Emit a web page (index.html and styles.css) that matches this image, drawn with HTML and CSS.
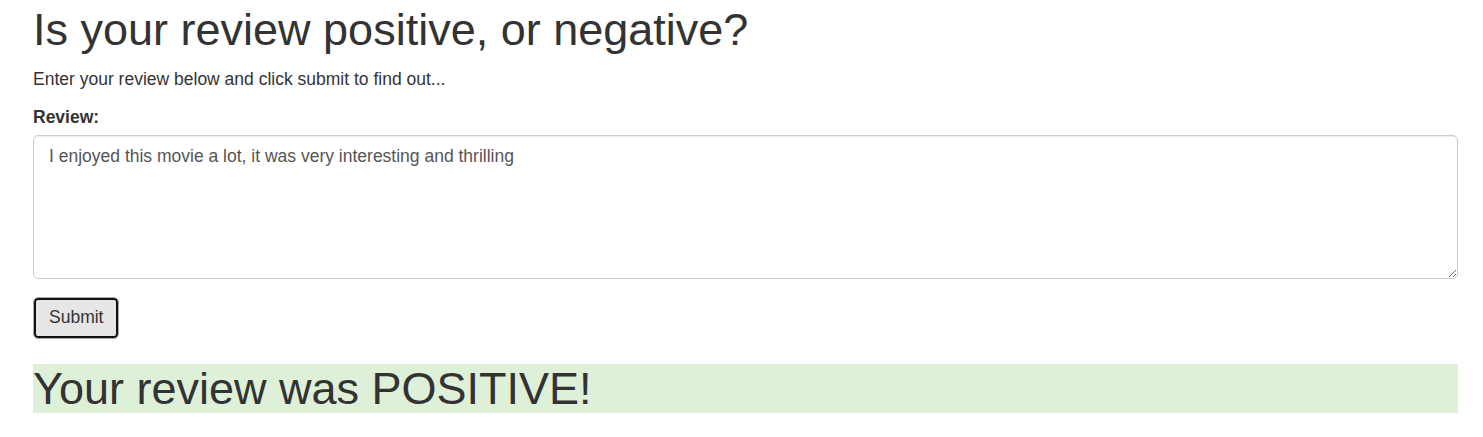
FILE: index.html
```html
<!DOCTYPE html>
<html lang="en">
<head>
<meta charset="utf-8">
<title>Review sentiment</title>
<link rel="stylesheet" href="styles.css">
</head>
<body>
<div class="container">
  <h1 class="title">Is your review positive, or negative?</h1>
  <p class="lead-text">Enter your review below and click submit to find out...</p>
  <form class="review-form">
    <div class="form-group">
      <label class="field-label" for="review">Review:</label>
      <textarea class="form-control" id="review" rows="5">I enjoyed this movie a lot, it was very interesting and thrilling</textarea>
    </div>
    <button type="button" class="btn btn-focus">Submit</button>
  </form>
  <h1 class="result">Your review was POSITIVE!</h1>
</div>
</body>
</html>
```
FILE: styles.css
```css
html, body {
  margin: 0;
  padding: 0;
  background: #fff;
}
body {
  font-family: "Liberation Sans", Arial, Helvetica, sans-serif;
  font-size: 17.5px;
  line-height: 25px;
  color: #333;
}
.container {
  padding: 0 25px 0 33px;
}
.title {
  font-size: 45px;
  font-weight: 400;
  line-height: 49.5px;
  margin: 5.4px 0 12.5px;
}
.lead-text {
  margin: 0 0 12.5px;
}
.review-form {
  margin: 0;
}
.form-group {
  margin-bottom: 18.25px;
}
.field-label {
  display: block;
  font-weight: 700;
  margin-bottom: 5.25px;
}
.form-control {
  display: block;
  box-sizing: border-box;
  width: 100%;
  height: 143.5px;
  margin: 0;
  padding: 7.5px 15px;
  font-family: "Liberation Sans", Arial, Helvetica, sans-serif;
  font-size: 17.5px;
  line-height: 25px;
  color: #555;
  background: #fff;
  border: 1.25px solid #ccc;
  border-radius: 5px;
  box-shadow: inset 0 1px 1px rgba(0, 0, 0, 0.075);
  resize: vertical;
}
.btn {
  display: inline-block;
  margin: 0;
  padding: 7.5px 15px;
  font-family: "Liberation Sans", Arial, Helvetica, sans-serif;
  font-size: 17.5px;
  line-height: 25px;
  color: #333;
  background: #e6e6e6;
  border: 1.25px solid #adadad;
  border-radius: 5px;
  cursor: pointer;
}
.btn-focus {
  box-shadow: inset 0 0 0 2px #111;
}
.result {
  font-size: 45px;
  font-weight: 400;
  line-height: 49.5px;
  margin: 25px 0 12.5px;
  background: #dff0d8;
}
```
